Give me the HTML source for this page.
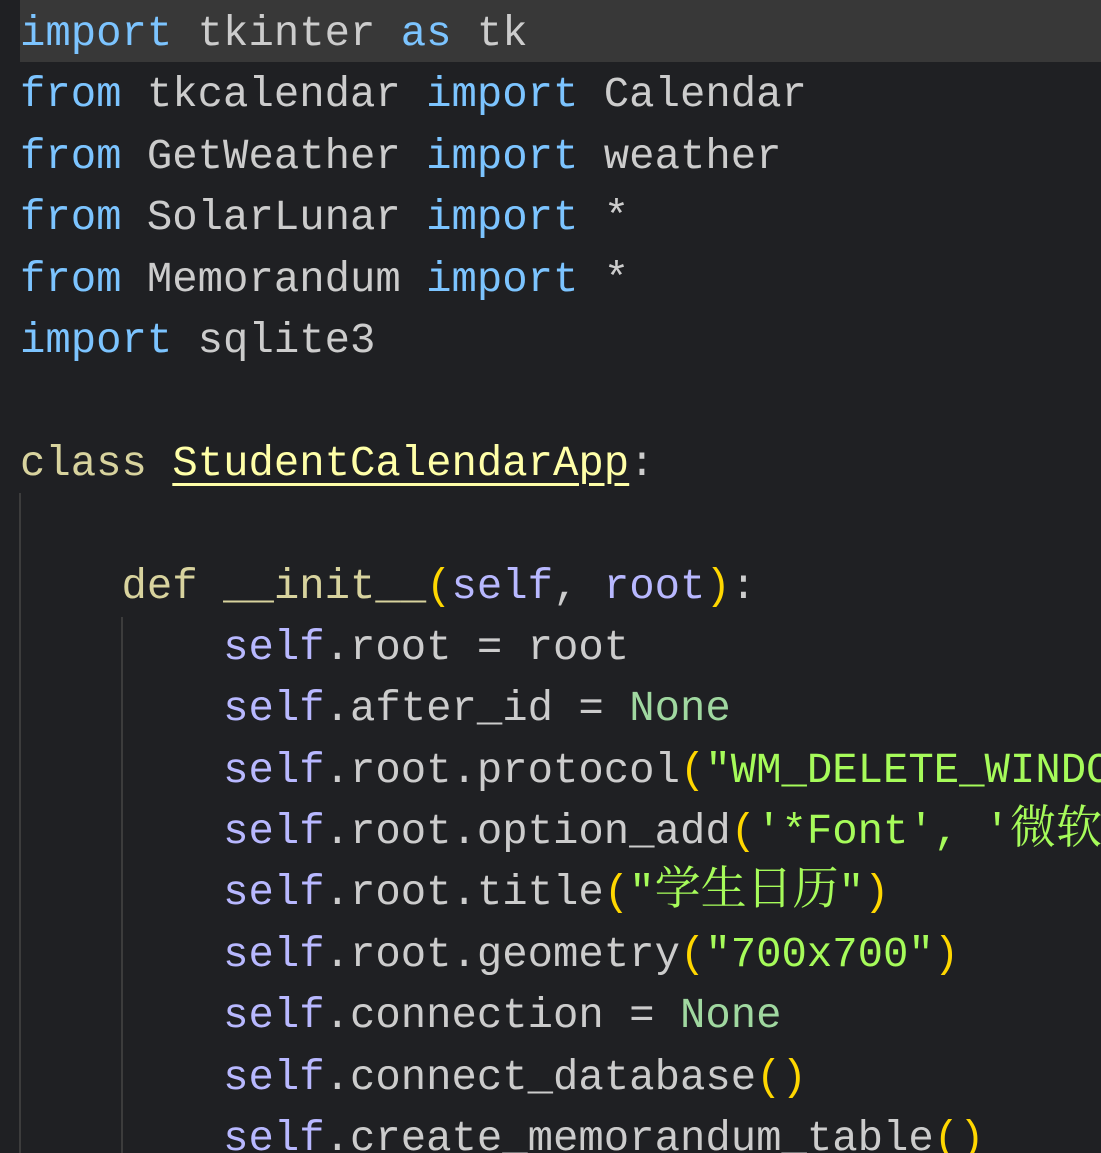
<!DOCTYPE html>
<html><head><meta charset="utf-8"><style>
html,body{margin:0;padding:0;background:#1f2023;width:1101px;height:1153px;overflow:hidden;position:relative}
.code{position:absolute;left:20px;right:0;top:4px;bottom:0;overflow:hidden;font-family:"Liberation Mono","Noto Serif CJK SC",monospace;font-size:42.3px;color:#cccccc;white-space:normal}
.code div{height:61.4px;line-height:61.4px;overflow:visible;white-space:pre}
.hl{position:absolute;left:20px;right:0;top:0;height:62px;background:#383838}
.k{color:#7cc4ff}.c{color:#d8d39e}.n{color:#ffffa8;text-decoration:underline;text-decoration-thickness:3px;text-underline-offset:8px}
.s{color:#b8b8ff}.p{color:#ffd700}.g{color:#a6fb5a}.no{color:#a0d8a0}
.cj{font-family:"Noto Serif CJK SC",serif;line-height:0;font-size:46px}
.guide{position:absolute;width:2px;background:#3c3c3c}
</style></head><body>
<div class="hl"></div>
<div class="guide" style="left:19px;top:493px;height:660px"></div>
<div class="guide" style="left:121px;top:617px;height:536px"></div>
<div class="code"><div><span class="k">import</span> tkinter <span class="k">as</span> tk</div><div><span class="k">from</span> tkcalendar <span class="k">import</span> Calendar</div><div><span class="k">from</span> GetWeather <span class="k">import</span> weather</div><div><span class="k">from</span> SolarLunar <span class="k">import</span> *</div><div><span class="k">from</span> Memorandum <span class="k">import</span> *</div><div><span class="k">import</span> sqlite3</div><div> </div><div><span class="c">class</span> <span class="n">StudentCalendarApp</span>:</div><div> </div><div>    <span class="c">def</span> <span class="c">__init__</span><span class="p">(</span><span class="s">self</span>, <span class="s">root</span><span class="p">)</span>:</div><div>        <span class="s">self</span>.root = root</div><div>        <span class="s">self</span>.after_id = <span class="no">None</span></div><div>        <span class="s">self</span>.root.protocol<span class="p">(</span><span class="g">"WM_DELETE_WINDOW"</span><span class="p">)</span></div><div>        <span class="s">self</span>.root.option_add<span class="p">(</span><span class="g">'*Font', '<span class="cj">微软雅黑</span>'</span><span class="p">)</span></div><div>        <span class="s">self</span>.root.title<span class="p">(</span><span class="g">"<span class="cj">学生日历</span>"</span><span class="p">)</span></div><div>        <span class="s">self</span>.root.geometry<span class="p">(</span><span class="g">"700x700"</span><span class="p">)</span></div><div>        <span class="s">self</span>.connection = <span class="no">None</span></div><div>        <span class="s">self</span>.connect_database<span class="p">()</span></div><div>        <span class="s">self</span>.create_memorandum_table<span class="p">()</span></div></div>
</body></html>
